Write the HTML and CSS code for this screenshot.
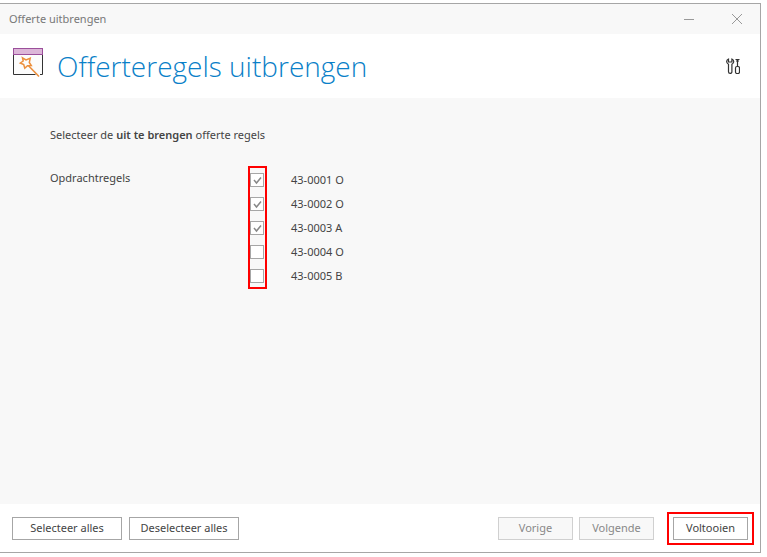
FILE: index.html
```html
<!DOCTYPE html>
<html lang="nl">
<head>
  <meta charset="UTF-8" />
  <meta name="viewport" content="width=device-width, initial-scale=1.0"/>
  <title>Offerte uitbrengen</title>
  <link rel="stylesheet" href="styles.css">
</head>
<body>
  <form class="window" onsubmit="return false">
    <div class="titlebar">
      <span>Offerte uitbrengen</span>
      <div class="window-buttons">
        <button type="button" class="icon-button" aria-label="Minimaliseren">
          <svg width="12" height="12" viewBox="0 0 12 12"><path d="M1 6.5h10"/></svg>
        </button>
        <button type="button" class="icon-button" aria-label="Sluiten">
          <svg width="12" height="12" viewBox="0 0 12 12"><path d="M1 1l10 10M11 1L1 11"/></svg>
        </button>
      </div>
    </div>

    <header class="header">
      <svg class="wizard-icon" width="30" height="36" viewBox="0 0 30 36">
        <rect x="0.5" y="0.5" width="29" height="26" fill="#fcfcfc"/>
        <path d="M0.5 6v20.5H22.500M29.5 6v20.5H27" fill="none" stroke="#333"/>
        <rect x="0.5" y="0.5" width="29" height="6" fill="#dcb6d8" stroke="#9b4f9b"/>
        <path d="M9.500 9.800l3.500 2.200 4.200-1.700-.9 4.200 2 3-3.800.3-2.700 2.400-1.100-3.700-3.400-1.500 2.900-2z" fill="none" stroke="#ec8f3c" stroke-width="1.5"/>
        <path d="M15.500 17.800l10.500 10.700" stroke="#ec8f3c" stroke-width="1.600"/>
      </svg>
      <h1>Offerteregels uitbrengen</h1>
      <button type="button" class="icon-button tools" aria-label="Instellingen">
        <svg width="14" height="16" viewBox="0 0 14 16">
          <path d="M2.500 1C1 1.500.6 2.800.7 4c.2 1 .8 1.800 1.800 2.200v7.500c0 2.200 3.400 2.200 3.400 0V6.200c1-.4 1.600-1.200 1.800-2.200.1-1.200-.3-2.500-1.800-3v3H2.500z"/>
          <path d="M9.500 1.500h4M10 3h3M11.500 1v7"/>
          <rect x="9.500" y="8.500" width="4" height="7" rx="1.500"/>
        </svg>
      </button>
    </header>

    <main class="content">
      <p class="intro">Selecteer de <b>uit te brengen</b> offerte regels</p>
      <div class="field" role="group" aria-labelledby="lines-label">
        <span id="lines-label" class="field-label">Opdrachtregels</span>
        <ul class="lines">
          <li><input type="checkbox" id="line1" checked><label for="line1">43-0001 O</label></li>
          <li><input type="checkbox" id="line2" checked><label for="line2">43-0002 O</label></li>
          <li><input type="checkbox" id="line3" checked><label for="line3">43-0003 A</label></li>
          <li><input type="checkbox" id="line4"><label for="line4">43-0004 O</label></li>
          <li><input type="checkbox" id="line5"><label for="line5">43-0005 B</label></li>
        </ul>
      </div>
    </main>

    <footer class="footer">
      <div class="select-buttons">
        <button type="button" class="btn btn-wide">Selecteer alles</button>
        <button type="button" class="btn btn-wide">Deselecteer alles</button>
      </div>
      <div class="step-buttons">
        <button type="button" class="btn" disabled>Vorige</button>
        <button type="button" class="btn" disabled>Volgende</button>
        <div class="marked">
          <button type="submit" class="btn">Voltooien</button>
        </div>
      </div>
    </footer>
  </form>
</body>
</html>
```

FILE: styles.css
```css
*,
*::before {
  box-sizing: border-box;
}
body {
  margin: 0;
  padding: 3px 6px 4px 0;
  background: #fff;
  color: #444;
  font-family: "Noto Sans", "Open Sans", sans-serif;
  font-size: 11px;
  line-height: 16px;
}
b {
  font-weight: 600;
}
.window {
  display: flex;
  flex-direction: column;
  min-height: calc(100vh - 7px);
  border: 1px solid #a6a6a6;
  border-left: 0;
}
.titlebar {
  display: flex;
  align-items: center;
  justify-content: space-between;
  height: 30px;
  padding: 0 17px 0 9px;
  background: #f8f8f8;
  color: #777;
}
.window-buttons {
  display: flex;
  gap: 36px;
}
.icon-button {
  display: block;
  padding: 0;
  border: 0;
  background: none;
}
.icon-button svg {
  display: block;
  fill: none;
  stroke: #999;
}
.header {
  display: flex;
  align-items: center;
  height: 64px;
  padding: 0 20px 0 13px;
}
.header h1 {
  flex: 1;
  margin: 0 0 0 14px;
  color: #0a7fc8;
  font-family: "Open Sans", "Noto Sans", sans-serif;
  font-size: 28px;
  font-weight: 300;
  line-height: 40px;
}
.header .tools svg {
  stroke: #333;
  stroke-width: 1.2;
}
.content {
  flex: 1;
  padding: 29px 50px;
  background: #f8f8f8;
}
.intro {
  margin: 0 0 25px;
}
.field {
  display: grid;
  grid-template-columns: 198px 1fr;
}
.field-label {
  padding-top: 2px;
}
.lines {
  position: relative;
  margin: 0;
  padding: 0 0 0 2px;
  list-style: none;
}
/* red frame round the column of tick boxes */
.lines::before {
  content: "";
  position: absolute;
  top: -2px;
  bottom: -1px;
  left: 0;
  width: 19px;
  border: 2px solid #f00;
  pointer-events: none;
}
.lines li {
  display: flex;
  align-items: center;
  gap: 27px;
  height: 24px;
}
.lines input {
  appearance: none;
  width: 14px;
  height: 14px;
  margin: 0;
  border: 1px solid #a6a6a6;
  background: #fff;
}
.lines input:checked {
  background: #fff url("data:image/svg+xml,%3Csvg xmlns='http://www.w3.org/2000/svg' viewBox='0 0 12 12'%3E%3Cpath d='M3 6l2.500 3L10 3.500' fill='none' stroke='%23888' stroke-width='1.500'/%3E%3C/svg%3E") center / 12px 12px no-repeat;
}
.footer {
  display: flex;
  align-items: center;
  justify-content: space-between;
  height: 48px;
  padding: 0 6px 0 12px;
}
.select-buttons,
.step-buttons {
  display: flex;
  align-items: center;
  gap: 6px;
}
.select-buttons {
  gap: 7px;
}
.btn {
  width: 75px;
  height: 23px;
  padding: 0;
  border: 1px solid #a6a6a6;
  background: #fff;
  color: #444;
  font: inherit;
}
.btn:disabled {
  border-color: #d0d0d0;
  background: #f8f8f8;
  color: #888;
}
.btn-wide {
  width: 110px;
}
.marked {
  display: flex;
  margin-left: 7px;
  padding: 3px 4px;
  border: 2px solid #f00;
}
```
